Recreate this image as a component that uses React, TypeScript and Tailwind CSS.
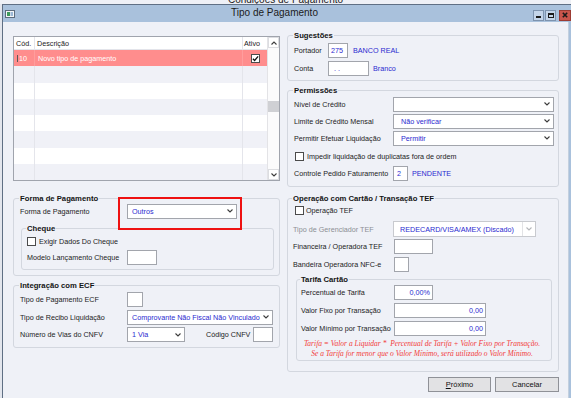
import clsx from "clsx"
import type { ReactNode } from "react"

const SANS = "font-['Liberation_Sans',Arial,sans-serif]"

const Chevron = ({ muted, up }: { muted?: boolean; up?: boolean }) => (
  <svg
    viewBox="0 0 6 4"
    width={6}
    height={4}
    fill="none"
    stroke={muted ? "#b4b6ba" : "#3c3c3c"}
    strokeWidth="1.1"
    aria-hidden="true"
  >
    <path d={up ? "M0.5 3.5 3 1 5.5 3.5" : "M0.5 0.5 3 3 5.5 0.5"} />
  </svg>
)

const Tick = () => (
  <svg viewBox="0 0 8 8" width={7} height={7} fill="none" stroke="#111" strokeWidth="1.5" aria-hidden="true">
    <path d="M1 4.2 3 6.2 7 1.5" />
  </svg>
)

const Check = ({ checked }: { checked?: boolean }) => (
  <span className="flex h-[9px] w-[9px] shrink-0 items-center justify-center border border-[#4b4b4b] bg-white">
    {checked && <Tick />}
  </span>
)

type GroupProps = { title: string; className?: string; children: ReactNode }

const Group = ({ title, className, children }: GroupProps) => (
  <fieldset className={clsx("rounded-[3px] border border-[#d3d7df]", className)}>
    <legend className="-ml-px px-px text-[7.7px] font-bold leading-[9px] text-[#141414]">{title}</legend>
    {children}
  </fieldset>
)

type SelectProps = { value?: string; className?: string; muted?: boolean; pad?: string }

const Select = ({ value, className, muted, pad = "pl-[4px]" }: SelectProps) => (
  <div
    className={clsx(
      "flex h-[15px] items-center border bg-white",
      muted ? "border-[#c8cacf]" : "border-[#a2a5ac]",
      className
    )}
  >
    <span className={clsx("flex-1 truncate text-[#2a2ad0]", pad)}>{value}</span>
    {muted && <span className="h-full w-px bg-[#e2e3e6]" />}
    <span className="flex w-[12px] justify-center">
      <Chevron muted={muted} />
    </span>
  </div>
)

type InputProps = { value?: string; className?: string; right?: boolean }

const Input = ({ value, className, right }: InputProps) => (
  <div
    className={clsx(
      "flex h-[15px] items-center border border-[#a2a5ac] bg-white px-[2px] text-[#2a2ad0]",
      right && "justify-end",
      className
    )}
  >
    {value}
  </div>
)

type RowProps = { label: string; labelW: string; className?: string; muted?: boolean; children: ReactNode }

const Row = ({ label, labelW, className, muted, children }: RowProps) => (
  <div className={clsx("flex items-center", className)}>
    <span className={clsx("shrink-0 whitespace-nowrap", labelW, muted && "text-[#8d8f94]")}>{label}</span>
    {children}
  </div>
)

const TitleBar = () => (
  <div className="flex h-[17px] bg-[#a9c1dc]">
    <div className="flex w-[13px] items-start pl-[2px] pt-[5px]">
      <svg viewBox="0 0 10 8" width={10} height={8} aria-hidden="true">
        <rect x="0.5" y="0.5" width="9" height="7" fill="#f4f6f8" stroke="#5d6c7e" />
        <rect x="2" y="2" width="3" height="4" fill="#3f9a5c" />
        <rect x="5.5" y="2" width="2.5" height="4" fill="#9bb8d6" />
      </svg>
    </div>
    <div className="flex flex-1 items-center justify-center pb-[1px] text-[10px] leading-[12px] text-[#1b1b1b]">
      Tipo de Pagamento
    </div>
    <div className="flex items-start gap-[1px] pt-[5px]">
      <span className="flex h-[10.5px] w-[11px] items-end justify-center border border-[#7d93ae] bg-[#c4d5e9] pb-[2px]">
        <span className="h-[2px] w-[5px] bg-[#1a1a1a]" />
      </span>
      <span className="flex h-[10.5px] w-[11px] items-center justify-center border border-[#7d93ae] bg-[#c4d5e9]">
        <span className="h-[5px] w-[6px] border border-t-2 border-[#1a1a1a]" />
      </span>
      <span className="ml-[2px] flex h-[10.5px] w-[12px] items-center justify-center border border-[#9c3b34] bg-[#c9554c]">
        <svg viewBox="0 0 6 6" width={6} height={6} stroke="#1a1a1a" strokeWidth="1.6" aria-hidden="true">
          <path d="M0.8 0.8 5.2 5.2M5.2 0.8 0.8 5.2" />
        </svg>
      </span>
    </div>
  </div>
)

const gridRows = [0, 1, 2, 3, 4, 5, 6, 7]

const PaymentGrid = () => (
  <div className="flex h-[145px] border border-[#a0a4ad] bg-white">
    <div className="flex flex-1 flex-col">
      <div className="flex h-[13px] items-center border-b border-[#e3e4ea]">
        <div className="flex h-full w-[21px] items-center border-r border-[#e3e4ea] pl-[2px]">Cód.</div>
        <div className="flex h-full w-[208px] items-center border-r border-[#e3e4ea] pl-[2px]">Descrição</div>
        <div className="flex h-full flex-1 items-center pl-[1px]">Ativo</div>
      </div>
      {gridRows.map((i) =>
        i === 0 ? (
          <div key={i} className="flex flex-1 bg-[#ff8d8d] text-white">
            <div className="flex w-[21px] items-center border-r border-[#ff9d9d] pl-[3px]">
              <span className="mr-[1px] h-[7px] w-px bg-[#5a5a5a]" />
              10
            </div>
            <div className="flex w-[208px] items-center border-r border-[#ff9d9d] pl-[3px]">
              Novo tipo de pagamento
            </div>
            <div className="flex flex-1 items-center justify-center">
              <Check checked />
            </div>
          </div>
        ) : (
          <div key={i} className={clsx("flex flex-1", i % 2 === 1 ? "bg-[#f0f1f7]" : "bg-white")}>
            <div className="w-[21px] border-r border-[#e4e5eb]" />
            <div className="w-[208px] border-r border-[#e4e5eb]" />
            <div className="flex-1" />
          </div>
        )
      )}
    </div>
    <div className="flex w-[12px] flex-col border-l border-[#e3e3e6] bg-[#fbfbfc]">
      <div className="flex h-[11px] items-center justify-center border border-[#dcdde1] bg-white">
        <Chevron up />
      </div>
      <div className="mt-[53px] h-[11px] bg-[#cfd0d4]" />
      <div className="flex-1" />
      <div className="flex h-[11px] items-center justify-center border border-[#dcdde1] bg-white">
        <Chevron />
      </div>
    </div>
  </div>
)

const LeftColumn = () => (
  <div className="flex w-[267px] flex-col pt-[14px]">
    <PaymentGrid />

    <Group title="Forma de Pagamento" className="mt-[12.5px] pb-[5px] pl-[6px] pr-[5px]">
      <Row label="Forma de Pagamento" labelW="w-[107px]" className="mt-[1px]">
        <div className="relative">
          <Select value="Outros" className="w-[110px]" />
          <span className="absolute -bottom-[11px] -left-[9px] -right-[5px] -top-[7px] border-2 border-[#ee1111]" />
        </div>
      </Row>
      <Group title="Cheque" className="ml-px mt-[5px] pb-[4px] pl-[5px]">
        <div className="mt-[4px] flex h-[9px] items-center gap-[3px]">
          <Check />
          <span>Exigir Dados Do Cheque</span>
        </div>
        <Row label="Modelo Lançamento Cheque" labelW="w-[100px]" className="mt-[4.5px]">
          <Input className="w-[30px]" />
        </Row>
      </Group>
    </Group>

    <Group title="Integração com ECF" className="mt-[4.5px] pb-[5px] pl-[6px] pr-[6px]">
      <Row label="Tipo de Pagamento ECF" labelW="w-[107px]" className="mt-[2.5px]">
        <Input className="w-[16px]" />
      </Row>
      <Row label="Tipo de Recibo Liquidação" labelW="w-[107px]" className="mt-[2.5px]">
        <Select value="Comprovante Não Fiscal Não Vinculado" className="flex-1" />
      </Row>
      <Row label="Número de Vias do CNFV" labelW="w-[107px]" className="mt-[2.5px]">
        <Select value="1 Via" className="w-[58px]" />
        <span className="ml-[21px] w-[47px]">Código CNFV</span>
        <Input className="w-[20px]" />
      </Row>
    </Group>
  </div>
)

const RightColumn = () => (
  <div className="flex w-[272px] flex-col pt-[8.5px]">
    <Group title="Sugestões" className="pb-[4.5px] pl-[6px]">
      <Row label="Portador" labelW="w-[34px]" className="mt-[3px]">
        <Input value="275" className="w-[20px]" />
        <span className="ml-[5px] text-[#2a2ad0]">BANCO REAL</span>
      </Row>
      <Row label="Conta" labelW="w-[34px]" className="mt-[3px]">
        <Input value=". ." className="w-[41px] pl-[5px]" />
        <span className="ml-[4px] text-[#2a2ad0]">Branco</span>
      </Row>
    </Group>

    <Group title="Permissões" className="mt-[4.5px] pb-[5px] pl-[6px] pr-[4px]">
      <Row label="Nível de Crédito" labelW="w-[99px]" className="mt-[2px]">
        <Select className="flex-1" />
      </Row>
      <Row label="Limite de Crédito Mensal" labelW="w-[99px]" className="mt-[2px]">
        <Select value="Não verificar" className="flex-1" pad="pl-[7px]" />
      </Row>
      <Row label="Permitir Efetuar Liquidação" labelW="w-[99px]" className="mt-[2px]">
        <Select value="Permitir" className="flex-1" pad="pl-[7px]" />
      </Row>
      <div className="mt-[6.5px] flex h-[9px] items-center gap-[3px] pl-px">
        <Check />
        <span>Impedir liquidação de duplicatas fora de ordem</span>
      </div>
      <Row label="Controle Pedido Faturamento" labelW="w-[99px]" className="mt-[5px]">
        <Input value="2" className="w-[15px] pl-[3px]" />
        <span className="ml-[4px] text-[#2a2ad0]">PENDENTE</span>
      </Row>
    </Group>

    <Group title="Operação com Cartão / Transação TEF" className="mt-[6.5px] pb-[10px] pl-[5px] pr-[5px]">
      <div className="mt-[3px] flex h-[9px] items-center gap-[2px] pl-[2px]">
        <Check />
        <span>Operação TEF</span>
      </div>
      <Row label="Tipo de Gerenciador TEF" labelW="w-[100px]" className="mt-[6.5px]" muted>
        <Select value="REDECARD/VISA/AMEX (Discado)" className="h-[16px] w-[143px]" pad="pl-[6px]" muted />
      </Row>
      <Row label="Financeira / Operadora TEF" labelW="w-[101px]" className="mt-[2px]">
        <Input className="w-[39px]" />
      </Row>
      <Row label="Bandeira Operadora NFC-e" labelW="w-[101px]" className="mt-[3px]">
        <Input className="w-[15px]" />
      </Row>
      <Group title="Tarifa Cartão" className="ml-[3px] mr-px mt-[2.5px] pb-px pl-[4px]">
        <Row label="Percentual de Tarifa" labelW="w-[93px]" className="mt-[1.5px]">
          <Input value="0,00%" className="w-[39px]" right />
        </Row>
        <Row label="Valor Fixo por Transação" labelW="w-[93px]" className="mt-[3px]">
          <Input value="0,00" className="w-[92px]" right />
        </Row>
        <Row label="Valor Mínimo por Transação" labelW="w-[93px]" className="mt-[3px]">
          <Input value="0,00" className="w-[92px]" right />
        </Row>
        <div className="mt-[3px] pr-[8px] text-center font-['Liberation_Serif',serif] text-[7.5px] italic leading-[10px] text-[#f23a3a]">
          <p className="whitespace-pre">Tarifa = Valor a Liquidar *  Percentual de Tarifa + Valor Fixo por Transação.</p>
          <p>Se a Tarifa for menor que o Valor Mínimo, será utilizado o Valor Mínimo.</p>
        </div>
      </Group>
    </Group>

    <div className="mt-[5px] flex justify-end gap-[4px]">
      <button
        type="button"
        className="h-[15px] w-[63px] border border-[#8f9197] bg-[#e2e2e4] text-[7.5px] leading-[13px] text-[#111]"
      >
        <span className="underline">P</span>róximo
      </button>
      <button
        type="button"
        className="h-[15px] w-[64px] border border-[#8f9197] bg-[#e2e2e4] text-[7.5px] leading-[13px] text-[#111]"
      >
        Cancelar
      </button>
    </div>
  </div>
)

export default function App() {
  return (
    <div
      className={clsx(
        SANS,
        "flex h-[398px] w-[571px] flex-col overflow-hidden bg-[#eef0f6] text-[7.2px] leading-[9px] text-[#1c1c1c]"
      )}
    >
      <div className="flex h-[4px] justify-center overflow-hidden">
        <span className="-mt-[6px] text-[10px] leading-[12px] text-[#222]">Condições de Pagamento</span>
      </div>
      <div className="flex flex-1">
        <div className="w-[2px] bg-[#e3e6ed]" />
        <div className="flex flex-1 flex-col border-l border-t border-[#5f6f84]">
          <TitleBar />
          <div className="flex flex-1">
            <div className="flex flex-1 gap-[7px] bg-[#eff1f7] pl-[10px] pr-[9px]">
              <LeftColumn />
              <RightColumn />
            </div>
            <div className="w-[3px] border-l border-[#c3d0df] bg-[#a9c1dc]" />
          </div>
        </div>
      </div>
    </div>
  )
}
